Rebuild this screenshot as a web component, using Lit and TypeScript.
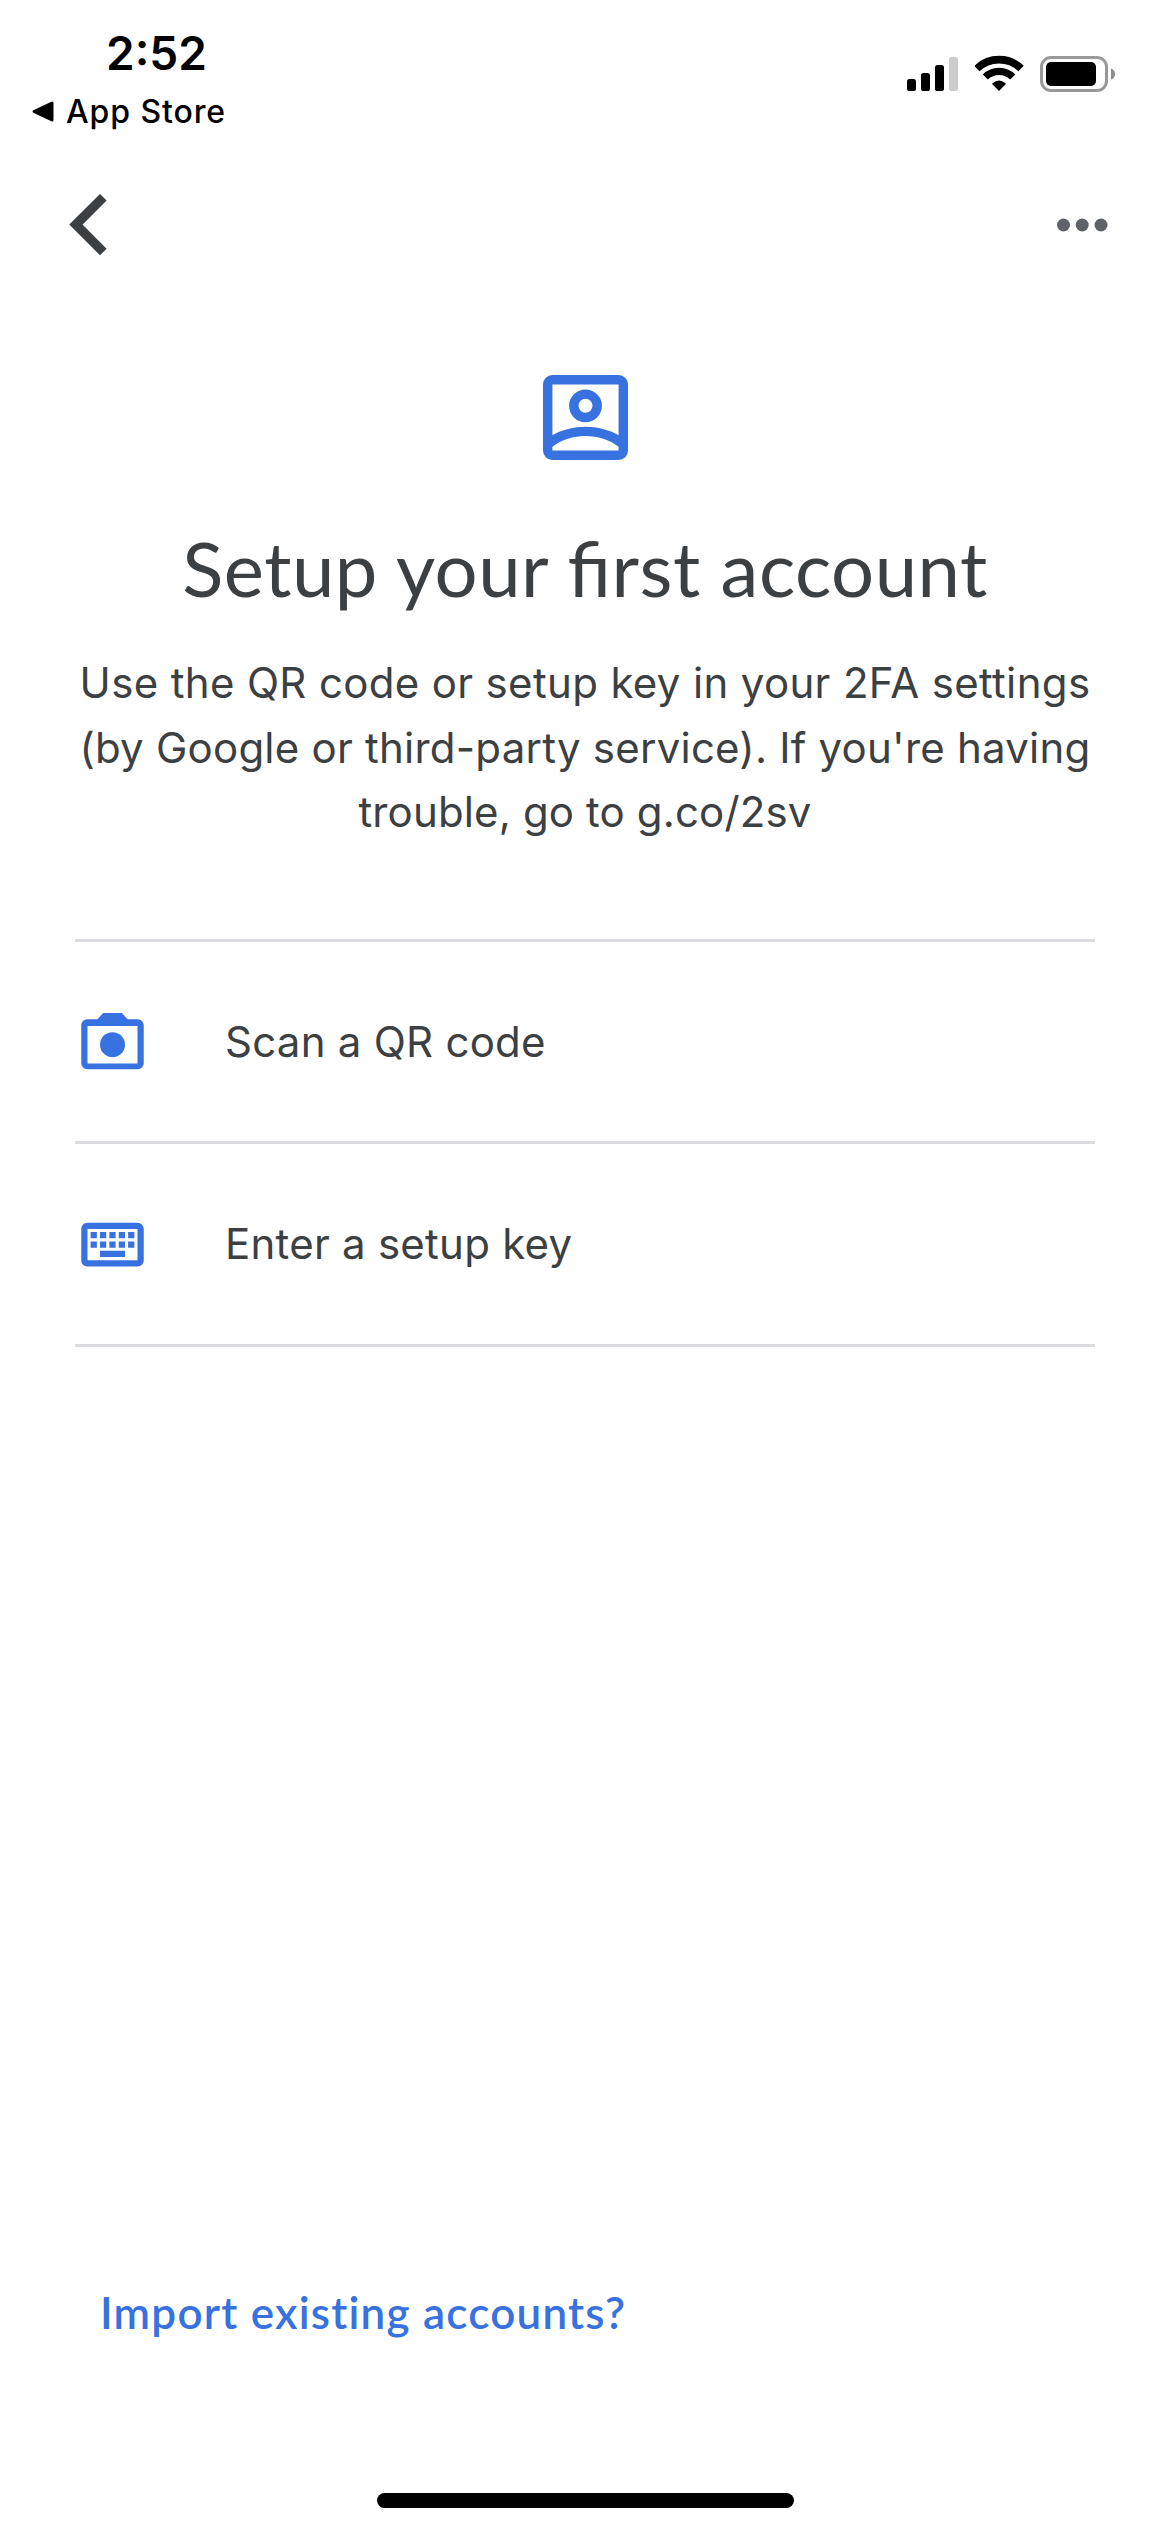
import { LitElement, html, svg, css } from "lit";
import { customElement } from "lit/decorators.js";

const BLUE = "#3871e0";

const cameraIcon = svg`
  <path fill=${BLUE} fill-rule="evenodd"
    d="M9 2.9h6L16.83 4.9H20c1.1 0 2 .9 2 2v12c0 1.1-.9 2-2 2H4c-1.1 0-2-.9-2-2v-12c0-1.1.9-2 2-2h3.17zM4 7v12h16V7z"/>
  <circle cx="12" cy="13" r="4" fill=${BLUE}/>`;

const keyboardIcon = svg`
  <path fill=${BLUE} fill-rule="evenodd"
    d="M4 5h16c1.1 0 2 .9 2 2v10c0 1.1-.9 2-2 2H4c-1.1 0-2-.9-2-2V7c0-1.1.9-2 2-2zM4 7v10h16V7z"/>
  <path fill=${BLUE}
    d="M5 8h2v2H5zM8 8h2v2H8zM11 8h2v2h-2zM14 8h2v2h-2zM17 8h2v2h-2zM5 11h2v2H5zM8 11h2v2H8zM11 11h2v2h-2zM14 11h2v2h-2zM17 11h2v2h-2zM8 14h8v2H8z"/>`;

@customElement("status-bar")
export class StatusBar extends LitElement {
  static styles = css`
    :host {
      display: flex;
      justify-content: space-between;
      height: 156px;
      box-sizing: border-box;
      padding: 25px 54px 0 32px;
      color: #000;
    }
    .left { display: flex; flex-direction: column; gap: 11px; }
    .time {
      padding-left: 74px;
      font-size: 46px;
      font-weight: 600;
      line-height: 56px;
    }
    .back {
      display: flex;
      align-items: center;
      gap: 12px;
      font-size: 32px;
      font-weight: 500;
      line-height: 40px;
      letter-spacing: 0.9px;
      white-space: nowrap;
    }
    .right { display: flex; align-items: flex-start; padding-top: 30px; }
    svg { display: block; }
    .wifi { margin-left: 16px; }
    .battery { margin-left: 16px; }
  `;
  render() {
    return html`
      <div class="left">
        <div class="time">2:52</div>
        <div class="back">
          <svg width="22" height="22" viewBox="0 0 22 22">
            <path d="M2 10.5 20 2V19z" stroke="#000" stroke-width="3" stroke-linejoin="round"/>
          </svg>
          <span>App Store</span>
        </div>
      </div>
      <div class="right">
        <svg width="52" height="37" viewBox="0 0 52 37">
          <rect x="0" y="24" width="9" height="12" rx="2.6"/>
          <rect x="14" y="18" width="9" height="18" rx="2.6"/>
          <rect x="28" y="10" width="9" height="26" rx="2.6"/>
          <rect x="42" y="2" width="9" height="34" rx="2.6" fill="#ccc"/>
        </svg>
        <svg class="wifi" width="49" height="37" viewBox="0 0 49 37">
          <g fill="none" stroke="#000">
            <path stroke-width="7.6" d="M1.9 13.6A31.8 31.8 0 0 1 46.1 13.6"/>
            <path stroke-width="7.2" d="M10.3 22A19.4 19.4 0 0 1 37.7 22"/>
          </g>
          <path d="M24 36 17.3 29.3Q17 28.7 17.6 28.2 24 22.8 30.4 28.2 31 28.7 30.7 29.3z"/>
        </svg>
        <svg class="battery" width="76" height="37" viewBox="0 0 76 37">
          <rect x="1.5" y="2.5" width="65" height="33" rx="9.5" fill="none" stroke="#999" stroke-width="3"/>
          <rect x="6" y="7" width="50" height="24" rx="5"/>
          <path d="M71 13.4Q75 15 75 19T71 24.6z" fill="#8c8c8c"/>
        </svg>
      </div>`;
  }
}

@customElement("setup-option")
export class SetupOption extends LitElement {
  static properties = { icon: {}, label: {} };
  declare icon: unknown;
  declare label: string;
  static styles = css`
    :host {
      display: flex;
      align-items: center;
      gap: 75px;
      height: 200px;
      border-bottom: 3px solid #dadce0;
      color: #3c4043;
    }
    svg { display: block; flex: none; }
    .label {
      font-size: 42px;
      line-height: 50px;
      letter-spacing: 0.25px;
      white-space: nowrap;
    }
  `;
  render() {
    return html`
      <svg width="75" height="75" viewBox="0 0 24 24">${this.icon}</svg>
      <span class="label">${this.label}</span>`;
  }
}

@customElement("app-root")
export class AppRoot extends LitElement {
  static styles = css`
    :host {
      display: flex;
      flex-direction: column;
      box-sizing: border-box;
      width: 1170px;
      height: 2532px;
      overflow: hidden;
      background: #fff;
      color: #3c4043;
      font-family: Inter, "Liberation Sans", sans-serif;
    }
    svg { display: block; }
    .nav {
      display: flex;
      justify-content: space-between;
      align-items: center;
      height: 137px;
      padding: 0 62px 0 69px;
    }
    .content {
      display: flex;
      flex-direction: column;
      align-items: center;
      padding-top: 82px;
    }
    .title {
      margin: 63px 0 0;
      font-family: Lato, "Liberation Sans", sans-serif;
      font-size: 76px;
      font-weight: 400;
      line-height: 90px;
      letter-spacing: 0.5px;
      font-feature-settings: "liga" 1;
      white-space: nowrap;
    }
    .description {
      margin: 38px 0 0;
      font-size: 42px;
      line-height: 64.5px;
      text-align: center;
      white-space: nowrap;
    }
    .line { display: block; }
    .line1 { letter-spacing: 0.34px; }
    .line2 { letter-spacing: 0.23px; }
    .line3 { letter-spacing: 0.14px; }
    .options {
      align-self: stretch;
      margin: 94.5px 75px 0;
      border-top: 3px solid #dadce0;
    }
    .first { height: 199px; }
    .footer {
      display: flex;
      flex-direction: column;
      margin-top: auto;
      padding-bottom: 24px;
    }
    .import {
      align-self: flex-start;
      margin: 0 0 151px 100px;
      color: #3871e0;
      font-family: Lato, "Liberation Sans", sans-serif;
      font-size: 44px;
      font-weight: 600;
      line-height: 60px;
      letter-spacing: 1.22px;
      text-decoration: none;
      white-space: nowrap;
    }
    .home {
      align-self: center;
      width: 417px;
      height: 15px;
      border-radius: 8px;
      background: #000;
    }
  `;

  render() {
    return html`
      <status-bar></status-bar>
      <div class="nav">
        <svg width="38" height="64" viewBox="0 0 38 64">
          <path d="M34.3 4.2 6.9 31.6 34.3 59" fill="none" stroke="#3c4043" stroke-width="9.4"/>
        </svg>
        <svg width="51" height="14" viewBox="0 0 51 14" fill="#5f6368">
          <circle cx="6.5" cy="7" r="6.5"/>
          <circle cx="25.2" cy="7" r="6.5"/>
          <circle cx="44" cy="7" r="6.5"/>
        </svg>
      </div>
      <main class="content">
        <svg width="85" height="85" viewBox="0 0 85 85">
          <path fill=${BLUE} fill-rule="evenodd"
            d="M9.4 0H75.6A9.4 9.4 0 0 1 85 9.4V75.6A9.4 9.4 0 0 1 75.6 85H9.4A9.4 9.4 0 0 1 0 75.6V9.4A9.4 9.4 0 0 1 9.4 0z
               M9.4 9.4V60.2C19 54.7 30.5 51.7 42.5 51.7S66 54.7 75.6 60.2V9.4z
               M9.4 75.6H75.6V71.8C66.5 64.8 54.7 61.1 42.5 61.1S18.5 64.8 9.4 71.8z"/>
          <circle cx="42.5" cy="30.8" r="11.7" fill="none" stroke=${BLUE} stroke-width="9.4"/>
        </svg>
        <h1 class="title">Setup your first account</h1>
        <p class="description">
          <span class="line line1">Use the QR code or setup key in your 2FA settings</span>
          <span class="line line2">(by Google or third-party service). If you're having</span>
          <span class="line line3">trouble, go to g.co/2sv</span>
        </p>
        <div class="options">
          <setup-option class="first" .icon=${cameraIcon} .label=${"Scan a QR code"}></setup-option>
          <setup-option .icon=${keyboardIcon} .label=${"Enter a setup key"}></setup-option>
        </div>
      </main>
      <footer class="footer">
        <a class="import">Import existing accounts?</a>
        <div class="home"></div>
      </footer>`;
  }
}
